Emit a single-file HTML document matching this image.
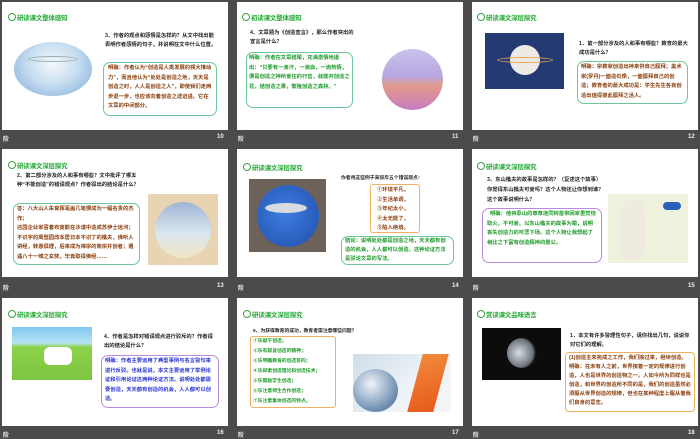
<!DOCTYPE html>
<html><head><meta charset="utf-8"><style>
*{margin:0;padding:0;box-sizing:border-box}
body{width:700px;height:437px;background:#4b4b4b;position:relative;overflow:hidden;font-family:"Liberation Sans","Noto Sans CJK SC",sans-serif}
.s{position:absolute;width:226px;height:128px;background:#fff}
.a{position:absolute}
.t{position:absolute;font-size:6.5px;color:#22a832;font-weight:bold;white-space:nowrap;letter-spacing:-0.2px}
.t::before{content:"";display:inline-block;width:6px;height:6px;border:1px solid #3aa040;border-radius:50%;margin-right:1px;vertical-align:-1px}
.q{position:absolute;font-size:5.3px;font-weight:bold;color:#222;line-height:9px}
.b{position:absolute;font-size:5.3px;line-height:9.5px;border:1px solid #6cc79a;border-radius:7px;padding:1px 4px;font-weight:bold}
.br{color:#8a3d0a}.gr{color:#1d9a2a}.bl{color:#2a35d0}
.ft{position:absolute;font-size:6px;color:#eee;font-weight:bold}
</style></head><body>

<!-- slide 10 -->
<div class="s" style="left:2px;top:2px"></div>
<div class="t" style="left:8px;top:12px">研读课文整体感知</div>
<div class="a" style="left:14px;top:42px;width:78px;height:54px;border-radius:50%;background:radial-gradient(ellipse at 50% 40%,#f4f8fb 0%,#c8def0 45%,#7aa9d8 100%)"></div>
<div class="a" style="left:28px;top:56px;width:50px;height:6px;border:1px solid #9aa;border-radius:50%"></div>
<div class="q" style="left:105px;top:32px;width:112px">3、作者的观点和感情是怎样的？从文中找出能表明作者感情的句子，并说明在文中什么位置。</div>
<div class="b br" style="left:103px;top:62px;width:114px;height:54px">明确：作者认为“创造是人类发展的强大推动力”，而且他认为“处处是创造之地，天天是创造之时，人人是创造之人”，即使我们走两步退一步，也应该向着创造之途迈进。它在文章的中间部分。</div>
<div class="ft" style="left:3px;top:134px">阶</div><div class="ft" style="left:217px;top:134px">10</div>

<!-- slide 11 -->
<div class="s" style="left:237px;top:2px"></div>
<div class="t" style="left:242px;top:12px">初读课文整体感知</div>
<div class="q" style="left:250px;top:29px;width:104px">4、文章题为《创造宣言》，那么作者突出的宣言是什么？</div>
<div class="b gr" style="left:246px;top:52px;width:107px;height:56px;padding:1px 2px">明确：作者在文章结尾，充满激情地道出：“只要有一滴汗，一滴血，一滴热情，便是创造之神所爱住的行宫，就能开创造之花，结创造之果，繁殖创造之森林。”</div>
<div class="a" style="left:382px;top:49px;width:61px;height:61px;border-radius:50%;background:linear-gradient(180deg,#c9c3ea 0%,#b7a6e0 45%,#e39a8c 60%,#c57cc2 100%)"></div>
<div class="ft" style="left:238px;top:134px">阶</div><div class="ft" style="left:452px;top:134px">11</div>

<!-- slide 12 -->
<div class="s" style="left:472px;top:2px"></div>
<div class="t" style="left:477px;top:12px">研读课文深层探究</div>
<div class="a" style="left:485px;top:33px;width:79px;height:56px;background:#243a73;overflow:hidden"><div class="a" style="left:25px;top:12px;width:30px;height:30px;border-radius:50%;background:#eceae6"></div><div class="a" style="left:12px;top:24px;width:56px;height:6px;border:1px solid #e9a84a;border-radius:50%"></div></div>
<div class="q" style="left:579px;top:40px;width:112px">1．第一部分涉及的人和事有哪些？教育的最大成功是什么？</div>
<div class="b br" style="left:577px;top:61px;width:111px;height:43px;padding:1px 3px">明确：宗教家创造出神来供自己膜拜；美术家(罗丹)一面造石像，一面膜拜自己的创造；教育者的最大成功是：学生先生各自创造出值得彼此膜拜之活人。</div>
<div class="ft" style="left:473px;top:134px">阶</div><div class="ft" style="left:688px;top:134px">12</div>

<!-- slide 13 -->
<div class="s" style="left:2px;top:149px"></div>
<div class="t" style="left:8px;top:160px">研读课文深层探究</div>
<div class="q" style="left:17px;top:172px;width:124px">2、第二部分涉及的人和事有哪些？文中批评了哪五种“不能创造”的错误观点？作者得出的结论是什么？</div>
<div class="b br" style="left:13px;top:203px;width:127px;height:62px;padding:1px 3px">答：八大山人朱耷挥毫画几笔便成为一幅名贵的杰作；<br>还园企业家冒着布竟能在沙漠中造成苏伊士运河；不识字的鹰鹫园改本居日本不识丁的樵夫，佛听人讲经，转愚俱理，后来成为禅宗的南宗开创者；遭遇八十一难之玄奘，毕竟取得佛经……</div>
<div class="a" style="left:148px;top:194px;width:70px;height:71px;background:#e8d4b2"><div class="a" style="left:7px;top:8px;width:56px;height:56px;border-radius:50%;background:linear-gradient(180deg,#9fb4d4 0%,#d8e6ee 55%,#f0e6c8 100%)"></div></div>
<div class="ft" style="left:3px;top:283px">阶</div><div class="ft" style="left:217px;top:283px">13</div>

<!-- slide 14 -->
<div class="s" style="left:237px;top:149px"></div>
<div class="t" style="left:243px;top:162px">研读课文深层探究</div>
<div class="a" style="left:249px;top:179px;width:77px;height:73px;background:#6d625a"><div class="a" style="left:8px;top:6px;width:62px;height:62px;border-radius:50%;background:radial-gradient(circle at 45% 45%,#3f7ee0,#1e4eab)"></div><div class="a" style="left:16px;top:24px;width:42px;height:10px;border-radius:50%;background:#d8dce0"></div></div>
<div class="q" style="left:341px;top:174px;width:120px;font-size:4.8px">作者用这些例子来驳斥五个错误观点：</div>
<div class="b br" style="left:370px;top:184px;width:50px;height:49px;border-color:#f0b060;border-radius:3px;line-height:9.5px;padding:1px 6px">①环境平凡，<br>②生活单调，<br>③年纪太小，<br>④太无能了，<br>⑤陷入绝境。</div>
<div class="b gr" style="left:341px;top:236px;width:113px;height:29px;line-height:9px;padding:0 3px">结论：说明处处都是创造之地，天天都有创造的机会，人人都可以创造。这种论证方法是驳论文章的写法。</div>
<div class="ft" style="left:238px;top:283px">阶</div><div class="ft" style="left:452px;top:283px">14</div>

<!-- slide 15 -->
<div class="s" style="left:472px;top:149px"></div>
<div class="t" style="left:477px;top:161px">研读课文深层探究</div>
<div class="q" style="left:487px;top:175px;width:118px;line-height:10px">3、东山樵夫的故事是怎样的？（复述这个故事）你觉得东山樵夫可爱吗？这个人物还让你想到谁？这个故事说明什么？</div>
<div class="b gr" style="left:482px;top:208px;width:120px;height:55px;border-color:#b88ae0;padding:1px 4px">&nbsp;&nbsp;明确：他将泰山的草草连同树苗带回家里焚烧取火。不可爱。以东山樵夫的故事为喻，说明丧失创造力的可悲下场。这个人物让我想起了相比之下富有创造精神的愚公。</div>
<div class="a" style="left:608px;top:194px;width:80px;height:69px;background:#eef2dc"><div class="a" style="left:12px;top:6px;width:26px;height:60px;border-radius:12px;background:#f0ebe0"></div><div class="a" style="left:55px;top:8px;width:18px;height:8px;background:#2b5fb8;border-radius:4px"></div></div>
<div class="ft" style="left:473px;top:283px">阶</div><div class="ft" style="left:688px;top:283px">15</div>

<!-- slide 16 -->
<div class="s" style="left:2px;top:298px"></div>
<div class="t" style="left:8px;top:309px">研读课文深层探究</div>
<div class="a" style="left:12px;top:327px;width:80px;height:53px;background:linear-gradient(180deg,#7fc8ee 0%,#b8e2f4 30%,#8cd24a 38%,#7cc540 100%)"><div class="a" style="left:32px;top:20px;width:28px;height:18px;background:#fff;border-radius:6px"></div></div>
<div class="q" style="left:104px;top:333px;width:114px">4、作者是怎样对错误观点进行驳斥的？作者得出的结论是什么？</div>
<div class="b bl" style="left:101px;top:355px;width:118px;height:53px;border-color:#b88ae0;padding:1px 3px">明确：作者主要运用了典型事例与名言警句来进行反驳。也就是说，本文主要运用了举例论证和引用论证这两种论证方法。说明处处都需要创造，天天都有创造的机会，人人都可以创造。</div>
<div class="ft" style="left:3px;top:430px">阶</div><div class="ft" style="left:217px;top:430px">16</div>

<!-- slide 17 -->
<div class="s" style="left:237px;top:298px"></div>
<div class="t" style="left:243px;top:309px">研读课文深层探究</div>
<div class="q" style="left:253px;top:327px;width:200px;font-size:4.8px">5、为获得教育的成功，教育者需注意哪些问题？</div>
<div class="b gr" style="left:250px;top:336px;width:86px;height:72px;border-color:#f0b060;border-radius:3px;line-height:10px;padding:0 2px;font-size:4.8px">①乐献于创造；<br>②乐有献身创造的精神；<br>③乐明确教育的创造目的；<br>④乐探索创造理论和创造技术；<br>⑤乐鼓励学生创造；<br>⑥乐注意师生合作创造；<br>⑦乐注意集体创造的特点。</div>
<div class="a" style="left:353px;top:354px;width:98px;height:58px;background:linear-gradient(135deg,#cfdde8,#eef3f7 60%,#f5f5f5)"><div class="a" style="left:0;top:15px;width:45px;height:43px;border-radius:50%;background:radial-gradient(circle at 40% 35%,#f0f4f8,#6b8bb0 70%,#3c5575)"></div><div class="a" style="left:62px;top:0;width:26px;height:58px;background:linear-gradient(160deg,#f28a3c,#e65a1a);transform:skewX(-15deg)"></div></div>
<div class="ft" style="left:238px;top:430px">阶</div><div class="ft" style="left:452px;top:430px">17</div>

<!-- slide 18 -->
<div class="s" style="left:472px;top:298px"></div>
<div class="t" style="left:477px;top:309px">赏读课文品味语言</div>
<div class="a" style="left:482px;top:328px;width:79px;height:52px;background:#0c0c0c"><div class="a" style="left:25px;top:10px;width:30px;height:30px;border-radius:50%;background:radial-gradient(circle at 40% 50%,#d8dde4,#6c727a 60%,#111 72%)"></div></div>
<div class="q" style="left:570px;top:332px;width:124px">1．本文有许多警理性句子，请你找出几句，说说你对它们的理解。</div>
<div class="b br" style="left:565px;top:352px;width:130px;height:60px;border-color:#f0b060;border-radius:4px;line-height:9px;padding:1px 3px">(1)创造主未完成之工作，我们接过来，继续创造。明确：在未有人之前，世界按着一定的规律进行创造，人也是世界的创造物之一。人如今所为同样也是创造，和世界的创造所不同的是，我们的创造虽然必须服从世界创造的规律，但也在某种程度上服从着我们自身的意志。</div>
<div class="ft" style="left:473px;top:430px">阶</div><div class="ft" style="left:688px;top:430px">18</div>
</body></html>
